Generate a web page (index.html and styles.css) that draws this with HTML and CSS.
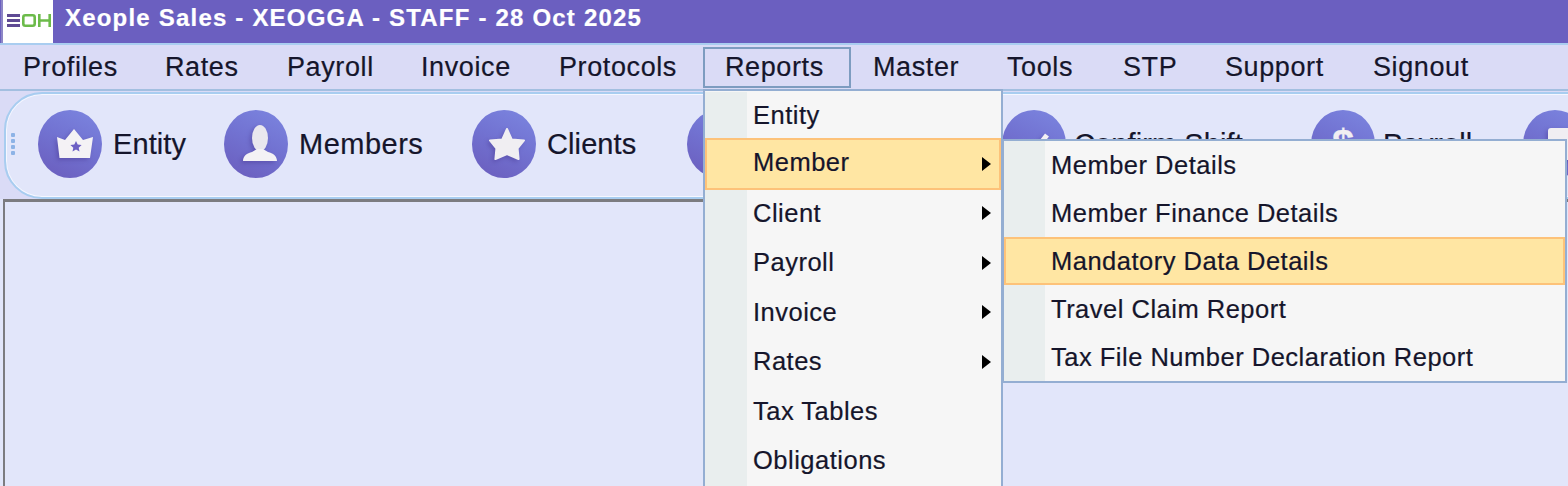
FILE: index.html
```html
<!DOCTYPE html>
<html lang="en">
<head>
<meta charset="utf-8">
<title>Xeople Sales</title>
<link rel="stylesheet" href="styles.css">
</head>
<body>
<div class="app">
  <header class="titlebar">
    <div class="logo">
      <svg width="44" height="13" viewBox="0 0 44 13">
        <g fill="#5f4a94"><rect x="0" y="0" width="13" height="3"/><rect x="0" y="5" width="13" height="3"/><rect x="0" y="10" width="13" height="3"/></g>
        <g fill="none" stroke="#6cbb4a" stroke-width="2.6"><rect x="16.300" y="1.300" width="11.400" height="10.400" rx="2"/><path d="M32.300 0v13M42.700 0v13M32.300 6.500h10.400"/></g>
      </svg>
    </div>
    <span class="title">Xeople Sales - XEOGGA - STAFF - 28 Oct 2025</span>
  </header>
  <nav class="menubar">
    <span class="mi m-profiles">Profiles</span>
    <span class="mi m-rates">Rates</span>
    <span class="mi m-payroll">Payroll</span>
    <span class="mi m-invoice">Invoice</span>
    <span class="mi m-protocols">Protocols</span>
    <span class="mi m-reports">Reports</span>
    <span class="mi m-master">Master</span>
    <span class="mi m-tools">Tools</span>
    <span class="mi m-stp">STP</span>
    <span class="mi m-support">Support</span>
    <span class="mi m-signout">Signout</span>
  </nav>
  <section class="toolbar">
    <div class="grip"><i></i><i></i><i></i><i></i></div>
    <div class="tool t-entity">
      <span class="orb"><svg class="glyph" viewBox="0 0 64 68" width="64" height="68"><path d="M19 27l8 3 9-11 9 11 10-3-3 21H21.500z" fill="#f4f2f5"/><path d="M38 31l1.700 3.600 3.900.4-2.900 2.700.8 3.900-3.500-2-3.500 2 .8-3.900-2.900-2.700 3.900-.4z" fill="#6c5fc4"/></svg></span>
      <span class="tl">Entity</span>
    </div>
    <div class="tool t-members">
      <span class="orb"><svg class="glyph" viewBox="0 0 64 68" width="64" height="68"><ellipse cx="36" cy="28" rx="8" ry="13" fill="#e9e7ee"/><path d="M19 51c0-5 4-8 9-9l5-3h6l5 3c5 1 9 4 9 9z" fill="#f4f2f5"/></svg></span>
      <span class="tl tl-members">Members</span>
    </div>
    <div class="tool t-clients">
      <span class="orb"><svg class="glyph" viewBox="0 0 64 68" width="64" height="68"><path d="M35 19l4.700 10.500 12.300 1-6.400 8 1 10.500-11.600-5-11.600 5 1-10.500-6.400-8 12.300-1z" fill="#f0eef2" stroke="#f0eef2" stroke-width="2" stroke-linejoin="round"/></svg></span>
      <span class="tl">Clients</span>
    </div>
    <div class="tool t-roster"><span class="orb"></span></div>
    <div class="tool t-confirm">
      <span class="orb"><svg class="glyph" viewBox="0 0 64 68" width="64" height="68"><path d="M24 36l7 7 14-18" fill="none" stroke="#f3f1f4" stroke-width="5"/></svg></span>
      <span class="tl tl-tight">Confirm Shift</span>
    </div>
    <div class="tool t-payroll">
      <span class="orb"><span class="dollar">$</span></span>
      <span class="tl tl-tight">Payroll</span>
    </div>
    <div class="tool t-last">
      <span class="orb"><svg class="glyph" viewBox="0 0 64 68" width="64" height="68"><rect x="25" y="18" width="26" height="32" rx="3" fill="#f0eef2"/></svg></span>
    </div>
  </section>
  <main class="desk"></main>
</div>
<ul class="menu menu-main">
  <li class="row first"><span class="gut"></span><span class="lbl">Entity</span></li>
  <li class="row hot"><span class="gut"></span><span class="lbl">Member</span><b class="arrow"></b></li>
  <li class="row"><span class="gut"></span><span class="lbl">Client</span><b class="arrow"></b></li>
  <li class="row"><span class="gut"></span><span class="lbl">Payroll</span><b class="arrow"></b></li>
  <li class="row"><span class="gut"></span><span class="lbl">Invoice</span><b class="arrow"></b></li>
  <li class="row"><span class="gut"></span><span class="lbl">Rates</span><b class="arrow"></b></li>
  <li class="row"><span class="gut"></span><span class="lbl">Tax Tables</span></li>
  <li class="row"><span class="gut"></span><span class="lbl">Obligations</span></li>
</ul>
<ul class="menu menu-sub">
  <li class="row"><span class="gut"></span><span class="lbl">Member Details</span></li>
  <li class="row"><span class="gut"></span><span class="lbl">Member Finance Details</span></li>
  <li class="row hot"><span class="gut"></span><span class="lbl">Mandatory Data Details</span></li>
  <li class="row"><span class="gut"></span><span class="lbl">Travel Claim Report</span></li>
  <li class="row"><span class="gut"></span><span class="lbl">Tax File Number Declaration Report</span></li>
</ul>
</body>
</html>
```

FILE: styles.css
```css
* { box-sizing: border-box; }
html, body { margin: 0; height: 100%; overflow: hidden; }
body { font-family: "Liberation Sans", Arial, sans-serif; color: #15152b; background: #e2e6fa; position: relative; -webkit-text-stroke: 0.2px currentColor; }
.app { display: flex; flex-direction: column; width: 1568px; height: 486px; overflow: hidden; }

.titlebar { display: flex; align-items: center; height: 43px; background: #6b5fc0; flex: none; }
.logo { width: 52px; height: 43px; background: #fff; border-left: 2px solid #8d86c6; margin-left: 1px; padding: 0 0 2px 4px; display: flex; align-items: center; flex: none; }
.title { margin-left: 12px; margin-top: -8px; color: #fff; font-size: 24px; font-weight: 700; letter-spacing: 1.200px; }

.menubar { height: 48px; flex: none; display: flex; background: #dadbf6; border-top: 2px solid #a9cdf0; border-bottom: 2px solid #a3bfe0; font-size: 27px; padding-left: 23px; }
.mi { display: flex; align-items: center; height: 41px; margin-top: 2px; letter-spacing: 0.600px; flex: none; }
.m-profiles { width: 142px; }
.m-rates { width: 122px; }
.m-payroll { width: 134px; }
.m-invoice { width: 138px; }
.m-protocols { width: 144px; }
.m-reports { width: 148px; padding-left: 20px; border: 2px solid #7d9cc0; }
.m-master { width: 134px; padding-left: 22px; }
.m-tools { width: 116px; padding-left: 22px; }
.m-stp { width: 102px; padding-left: 22px; }
.m-support { width: 148px; padding-left: 22px; }
.m-signout { padding-left: 22px; }

.toolbar { height: 108px; flex: none; display: flex; align-items: center; background: #dadbf6; position: relative; }
.toolbar::before { content: ""; position: absolute; left: 4px; top: 1px; right: -60px; height: 103px; background: #e2e6fa; border: 2px solid #a8cdf0; border-radius: 38px 0 0 38px; box-shadow: inset 0 0 0 1px #f5f7ff; }
.grip { position: relative; margin-left: 11px; width: 4px; display: flex; flex-direction: column; gap: 2px; margin-top: -3px; flex: none; }
.grip i { display: block; width: 4px; height: 4px; background: #8db3e6; border-radius: 1px; }
.tool { position: relative; display: flex; align-items: center; flex: none; margin-top: -2px; }
.orb { width: 64px; height: 68px; border-radius: 50%; background: linear-gradient(205deg, #7c86e0 0%, #7273d2 45%, #6a5cbc 100%); flex: none; display: flex; align-items: center; justify-content: center; }
.glyph { filter: drop-shadow(-2px 2px 2px rgba(60, 40, 130, 0.350)); }
.tl { font-size: 29px; margin-left: 11px; letter-spacing: 0.100px; }
.tl-members { letter-spacing: 0.500px; }
.tl-tight { margin-left: 8px; }
.t-entity { margin-left: 23px; width: 186px; }
.t-members { width: 248px; }
.t-clients { width: 215px; }
.t-roster { width: 315px; }
.t-confirm { width: 309px; }
.t-payroll { width: 212px; }
.dollar { color: #f0eef2; font-size: 40px; font-weight: 700; }
.desk { flex: 1; background: #e2e6fa; margin-left: 3px; border-top: 3px solid #7c7c80; border-left: 2px solid #7c7c80; }

.menu { position: absolute; list-style: none; margin: 0; padding: 0; background: #f6f6f6; border: 2px solid #94aed2; font-size: 25.500px; overflow: hidden; }
.menu-main { left: 703px; top: 89px; width: 300px; height: 420px; }
.menu-sub { left: 1002px; top: 139px; width: 565px; height: 244px; }
.row { position: relative; display: flex; align-items: center; height: 48px; }
.menu-main .row { height: 49.500px; }
.menu-main .row.first { height: 47px; padding-top: 1px; }
.menu-main .row.hot { height: 52px; margin-bottom: -1.500px; padding-bottom: 3px; z-index: 1; }
.gut { width: 42px; align-self: stretch; background: #e9eeee; flex: none; }
.menu-sub .gut { width: 41px; }
.lbl { margin-left: 6px; letter-spacing: 0.500px; white-space: nowrap; }
.row.hot { background: #ffe6a3; box-shadow: inset 0 0 0 2px #fdc279; }
.row.hot .gut { background: transparent; }
.arrow { position: absolute; right: 10px; top: 50%; margin-top: -7px; width: 0; height: 0; border-left: 9px solid #000; border-top: 7px solid transparent; border-bottom: 7px solid transparent; }
```
